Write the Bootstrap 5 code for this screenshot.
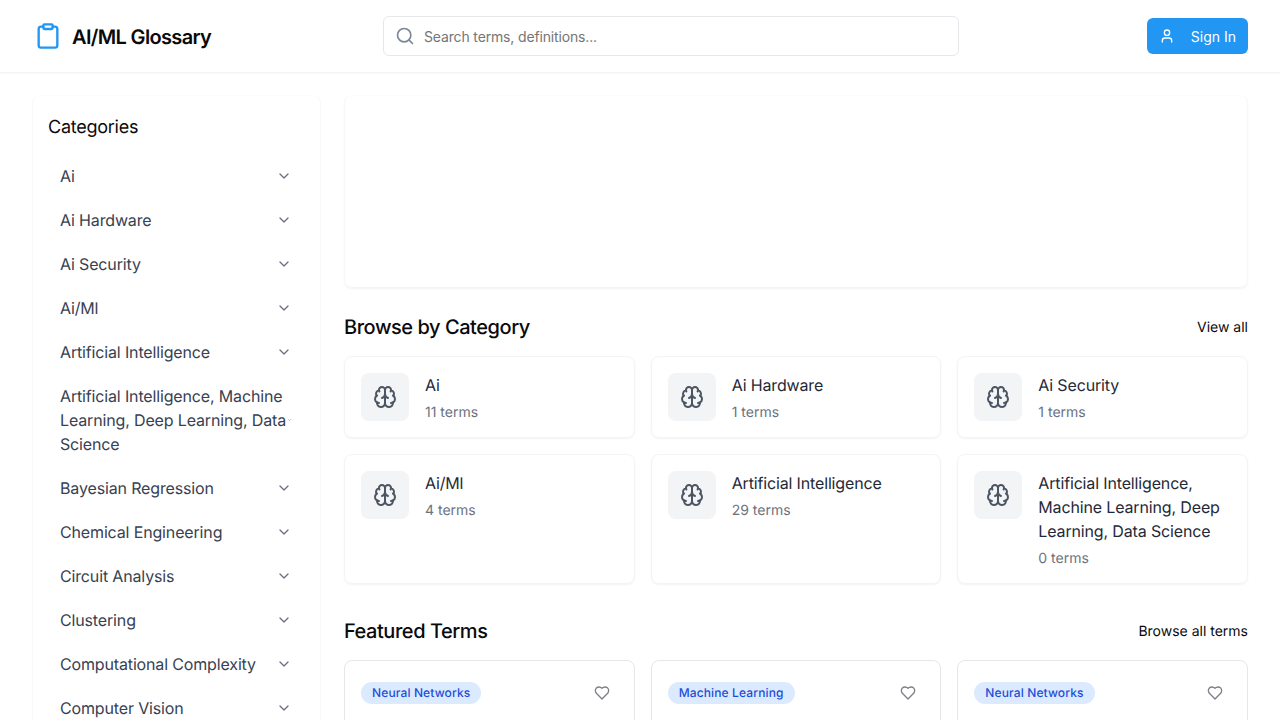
<!DOCTYPE html>
<html lang="en">

<head>
  <title>AI/ML Glossary</title>
  <link href="https://cdn.jsdelivr.net/npm/bootstrap@5.3.3/dist/css/bootstrap.min.css" rel="stylesheet">
  <style>
    html, body { height: 720px; overflow: hidden; }
    body { font-family: Inter, "Liberation Sans", sans-serif; color: #000; background: #fff; text-rendering: geometricPrecision; }
    .top-bar { height: 73px; padding: 0 32px; border-bottom: 1px solid #f3f4f6; box-shadow: 0 1px 2px rgba(0,0,0,.03); }
    .logo-mark { width: 28px; height: 28px; margin-left: 2px; color: #2196f3; }
    .logo-text { font-size: 20px; font-weight: 600; line-height: 28px; color: #0a0a0a; margin-left: 10px; padding-top: 2px; letter-spacing: -.65px; }
    .search-box { position: absolute; left: 383px; top: 16px; width: 576px; height: 40px; border: 1px solid #e5e7eb; border-radius: 6px; padding: 0 12px 0 11px; }
    .search-box svg { width: 20px; height: 20px; color: #7b8794; flex-shrink: 0; }
    .search-box input { border: 0; outline: 0; font-size: 14px; padding: 0; margin-left: 9px; width: 100%; color: #111827; letter-spacing: -.15px; }
    .search-box input::placeholder { color: #757575; opacity: 1; }
    .signin-btn { width: 101px; height: 36px; background: #2196f3; border: 0; border-radius: 6px; color: #fff; font-size: 14px; font-weight: 400; padding: 0 12px; }
    .signin-btn svg { width: 16px; height: 16px; }
    .page-wrap { padding: 22px 32px 0; gap: 23px; }
    .side-panel { width: 289px; flex-shrink: 0; border: 1px solid #f8f8f9; border-top-color: #fcfcfc; border-radius: 8px; padding: 21px 16px 16px 15px; height: 800px; }
    .side-title { font-size: 18px; font-weight: 400; line-height: 22px; margin-bottom: 15px; color: #0a0a0a; letter-spacing: -.25px; }
    .side-item { padding: 10px 12px; font-size: 16px; line-height: 24px; color: #374151; letter-spacing: -.15px; }
    .side-item svg { width: 16px; height: 16px; flex-shrink: 1.2; color: #6b7280; }
    .main-col { flex: 1; min-width: 0; }
    .hero-box { height: 193px; border: 1px solid #f7f7f8; border-top-color: #fcfcfc; border-bottom-color: #f3f4f6; border-radius: 8px; box-shadow: 0 1px 2px rgba(0,0,0,.05); margin-bottom: 24px; }
    .sec-head { height: 30px; margin-bottom: 14px; }
    .sec-title { font-size: 20px; font-weight: 500; line-height: 30px; margin: 0; color: #0a0a0a; letter-spacing: -.45px; }
    .sec-link { font-size: 14px; font-weight: 400; color: #0a0a0a; text-decoration: none; }
    .cat-card { border: 1px solid #f3f4f6; border-radius: 8px; box-shadow: 0 1px 2px rgba(0,0,0,.05); padding: 16px; gap: 16px; height: 100%; }
    .cat-icon { width: 48px; height: 48px; background: #f3f4f6; border-radius: 8px; flex-shrink: 0; color: #4b5563; }
    .cat-icon svg { width: 24px; height: 24px; }
    .cat-name { font-size: 16px; font-weight: 400; line-height: 24px; color: #1f2937; margin-bottom: 6px; letter-spacing: -.15px; }
    .cat-count { font-size: 14px; line-height: 20px; margin-bottom: -2px; color: #6b7280; }
    .cat-grid { margin-bottom: 32px; }
    .term-card { border: 1px solid #e5e7eb; border-radius: 8px; padding: 21px 16px 16px; height: 120px; }
    .term-tag { background: #dbeafe; color: #1d4ed8; font-size: 12px; font-weight: 500; line-height: 16px; padding: 3px 11px; border-radius: 999px; letter-spacing: .13px; }
    .term-heart { width: 16px; height: 16px; color: #7b7f87; margin: 3px 8px 0 0; }
  </style>
</head>

<body>
  <!-- Header -->
  <header class="top-bar d-flex align-items-center justify-content-between position-relative">
    <div class="d-flex align-items-center">
      <svg class="logo-mark" viewBox="0 0 24 24" fill="none" stroke="currentColor" stroke-width="2" stroke-linecap="round" stroke-linejoin="round"><rect width="8" height="4" x="8" y="2" rx="1"/><path d="M16 4h2a2 2 0 0 1 2 2v14a2 2 0 0 1-2 2H6a2 2 0 0 1-2-2V6a2 2 0 0 1 2-2h2"/></svg>
      <span class="logo-text">AI/ML Glossary</span>
    </div>
    <div class="search-box d-flex align-items-center">
      <svg viewBox="0 0 24 24" fill="none" stroke="currentColor" stroke-width="2" stroke-linecap="round" stroke-linejoin="round"><circle cx="11" cy="11" r="8"/><path d="m21 21-4.3-4.3"/></svg>
      <input type="text" placeholder="Search terms, definitions...">
    </div>
    <button class="signin-btn d-flex align-items-center justify-content-between">
      <svg viewBox="0 0 24 24" fill="none" stroke="currentColor" stroke-width="2" stroke-linecap="round" stroke-linejoin="round"><path d="M19 21v-2a4 4 0 0 0-4-4H9a4 4 0 0 0-4 4v2"/><circle cx="12" cy="7" r="4"/></svg>
      <span>Sign In</span>
    </button>
  </header>

  <div class="page-wrap d-flex">
    <!-- Sidebar -->
    <aside class="side-panel">
      <div class="side-title">Categories</div>
      <div id="sideList"></div>
    </aside>

    <main class="main-col">
      <div class="hero-box"></div>

      <div class="sec-head d-flex align-items-center justify-content-between">
        <h2 class="sec-title">Browse by Category</h2>
        <a class="sec-link" href="#">View all</a>
      </div>
      <div class="row row-cols-3 g-3 cat-grid" id="catGrid"></div>

      <div class="sec-head d-flex align-items-center justify-content-between">
        <h2 class="sec-title">Featured Terms</h2>
        <a class="sec-link" href="#">Browse all terms</a>
      </div>
      <div class="row row-cols-3 g-3" id="termGrid"></div>
    </main>
  </div>

  <script>
    const chevron = '<svg viewBox="0 0 24 24" fill="none" stroke="currentColor" stroke-width="2" stroke-linecap="round" stroke-linejoin="round"><path d="m6 9 6 6 6-6"/></svg>';
    const brain = '<svg viewBox="0 0 24 24" fill="none" stroke="currentColor" stroke-width="2" stroke-linecap="round" stroke-linejoin="round"><path d="M12 5a3 3 0 1 0-5.997.125 4 4 0 0 0-2.526 5.77 4 4 0 0 0 .556 6.588A4 4 0 1 0 12 18Z"/><path d="M12 5a3 3 0 1 1 5.997.125 4 4 0 0 1 2.526 5.77 4 4 0 0 1-.556 6.588A4 4 0 1 1 12 18Z"/><path d="M15 13a4.5 4.5 0 0 1-3-4 4.5 4.5 0 0 1-3 4"/><path d="M17.599 6.5a3 3 0 0 0 .399-1.375"/><path d="M6.003 5.125A3 3 0 0 0 6.401 6.5"/><path d="M3.477 10.896a4 4 0 0 1 .585-.396"/><path d="M19.938 10.5a4 4 0 0 1 .585.396"/><path d="M6 18a4 4 0 0 1-1.967-.516"/><path d="M19.967 17.484A4 4 0 0 1 18 18"/></svg>';
    const heart = '<svg class="term-heart" viewBox="0 0 24 24" fill="none" stroke="currentColor" stroke-width="2" stroke-linecap="round" stroke-linejoin="round"><path d="M19 14c1.49-1.46 3-3.21 3-5.5A5.5 5.5 0 0 0 16.5 3c-1.76 0-3 .5-4.5 2-1.5-1.5-2.74-2-4.5-2A5.5 5.5 0 0 0 2 8.5c0 2.3 1.5 4.05 3 5.5l7 7Z"/></svg>';

    const sideItems = ["Ai", "Ai Hardware", "Ai Security", "Ai/Ml", "Artificial Intelligence",
      "Artificial Intelligence, Machine Learning, Deep Learning, Data Science", "Bayesian Regression",
      "Chemical Engineering", "Circuit Analysis", "Clustering", "Computational Complexity", "Computer Vision"];
    document.getElementById("sideList").innerHTML = sideItems.map(name =>
      `<div class="side-item d-flex align-items-center justify-content-between"><span>${name}</span>${chevron}</div>`).join("");

    const cats = [["Ai", 11], ["Ai Hardware", 1], ["Ai Security", 1], ["Ai/Ml", 4], ["Artificial Intelligence", 29],
      ["Artificial Intelligence, Machine Learning, Deep Learning, Data Science", 0]];
    document.getElementById("catGrid").innerHTML = cats.map(c =>
      `<div class="col"><div class="cat-card d-flex"><div class="cat-icon d-flex align-items-center justify-content-center">${brain}</div><div><div class="cat-name">${c[0]}</div><div class="cat-count">${c[1]} terms</div></div></div></div>`).join("");

    const terms = ["Neural Networks", "Machine Learning", "Neural Networks"];
    document.getElementById("termGrid").innerHTML = terms.map(t =>
      `<div class="col"><div class="term-card d-flex align-items-start justify-content-between"><span class="term-tag">${t}</span>${heart}</div></div>`).join("");
  </script>
  <script src="https://cdn.jsdelivr.net/npm/bootstrap@5.3.3/dist/js/bootstrap.bundle.min.js"></script>
</body>

</html>
